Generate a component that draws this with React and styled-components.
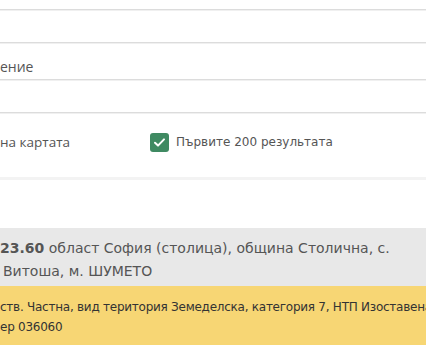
import React from "react";
import styled, { createGlobalStyle } from "styled-components";

const Global = createGlobalStyle`
  html, body { margin: 0; padding: 0; background: #fff; }
  body { width: 426px; height: 355px; overflow: hidden; font-family: "DejaVu Sans", Verdana, sans-serif; }
`;

const Page = styled.div`
  display: flex;
  flex-direction: column;
  padding-top: 9px;
`;

const Field = styled.div`
  height: ${(p) => p.$h}px;
  border-top: 1px solid #dcdcdc;
  box-shadow: inset 0 1px 0 #f0f0f0;
  display: flex;
  align-items: center;
  padding-top: ${(p) => p.$pt || 0}px;
  font-family: "Open Sans", sans-serif;
  font-size: 14px;
  color: #555;
  box-sizing: border-box;
`;

const CheckRow = styled.div`
  height: 65px;
  border-top: 1px solid #dcdcdc;
  box-shadow: inset 0 1px 0 #f0f0f0;
  display: grid;
  grid-template-columns: 150px auto;
  align-items: center;
  padding-bottom: 6px;
  box-sizing: border-box;
  color: #555;
`;

const Option = styled.label`
  display: flex;
  align-items: center;
  gap: 7px;
  font-family: ${(p) => p.$font || '"Open Sans", sans-serif'};
  font-size: ${(p) => p.$fs || 13.5}px;
`;

const Box = styled.span`
  width: 19px;
  height: 19px;
  border-radius: 3px;
  background: #3f8a62;
  display: flex;
  align-items: center;
  justify-content: center;
`;

const Separator = styled.div`
  height: 3px;
  background: #f3f3f3;
`;

const Spacer = styled.div`
  height: 48px;
`;

const InfoPanel = styled.div`
  background: #e8e8e8;
  height: 58px;
  box-sizing: border-box;
  padding-top: 9px;
  font-family: "DejaVu Sans", sans-serif;
  font-size: 14px;
  line-height: 23px;
  color: #555;
  white-space: nowrap;
  overflow: hidden;
`;

const Bold = styled.b`
  font-weight: bold;
`;

const Line = styled.div`
  padding-left: ${(p) => p.$pl || 0}px;
`;

const Note = styled.div`
  background: #f7d674;
  height: 59px;
  box-sizing: border-box;
  padding-top: 11px;
  font-family: "DejaVu Sans", sans-serif;
  font-size: 12px;
  letter-spacing: -0.25px;
  line-height: 20px;
  color: #333;
  white-space: nowrap;
  overflow: hidden;
`;

export default function App() {
  return (
    <>
      <Global />
      <Page>
        <Field $h={33} />
        <Field $h={37} $pt={10}>ение</Field>
        <Field $h={33} />
        <CheckRow>
          <Option>на картата</Option>
          <Option $font='"DejaVu Sans", sans-serif' $fs={12}>
            <Box>
              <svg width="13" height="13" viewBox="0 0 13 13">
                <path d="M2 6.8 L5 9.6 L11 3.4" fill="none" stroke="#fff" strokeWidth="2" strokeLinecap="round" strokeLinejoin="round" />
              </svg>
            </Box>
            Първите 200 результата
          </Option>
        </CheckRow>
        <Separator />
        <Spacer />
        <InfoPanel>
          <Line><Bold>23.60</Bold> област София (столица), община Столична, с.</Line>
          <Line $pl={3}>Витоша, м. ШУМЕТО</Line>
        </InfoPanel>
        <Note>
          <Line>ств. Частна, вид територия Земеделска, категория 7, НТП Изоставена</Line>
          <Line>ер 036060</Line>
        </Note>
      </Page>
    </>
  );
}
